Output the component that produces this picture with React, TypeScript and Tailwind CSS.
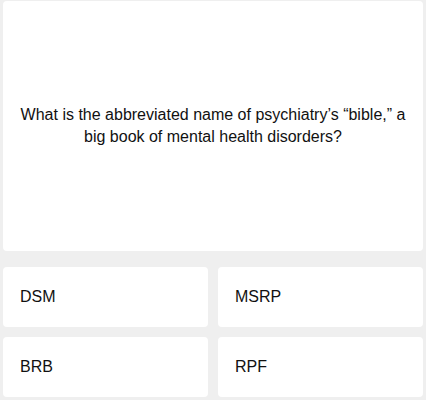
const ANSWERS = ["DSM", "MSRP", "BRB", "RPF"];

export default function App() {
  return (
    <div
      className="min-h-[400px] bg-[#efefef] px-[3px] pt-px text-[#111]"
      style={{ fontFamily: '"Liberation Sans", Arial, sans-serif' }}
    >
      <div className="flex h-[250px] items-center justify-center rounded-[4px] bg-white px-4">
        <p className="text-center text-[16px] leading-[22px]">
          What is the abbreviated name of psychiatry’s “bible,” a big book of
          mental health disorders?
        </p>
      </div>
      <div className="mt-[16px] grid grid-cols-2 gap-[10px]">
        {ANSWERS.map((answer) => (
          <button
            key={answer}
            className="flex h-[60px] items-center rounded-[4px] bg-white px-[17px] text-left text-[16px]"
          >
            {answer}
          </button>
        ))}
      </div>
    </div>
  );
}
